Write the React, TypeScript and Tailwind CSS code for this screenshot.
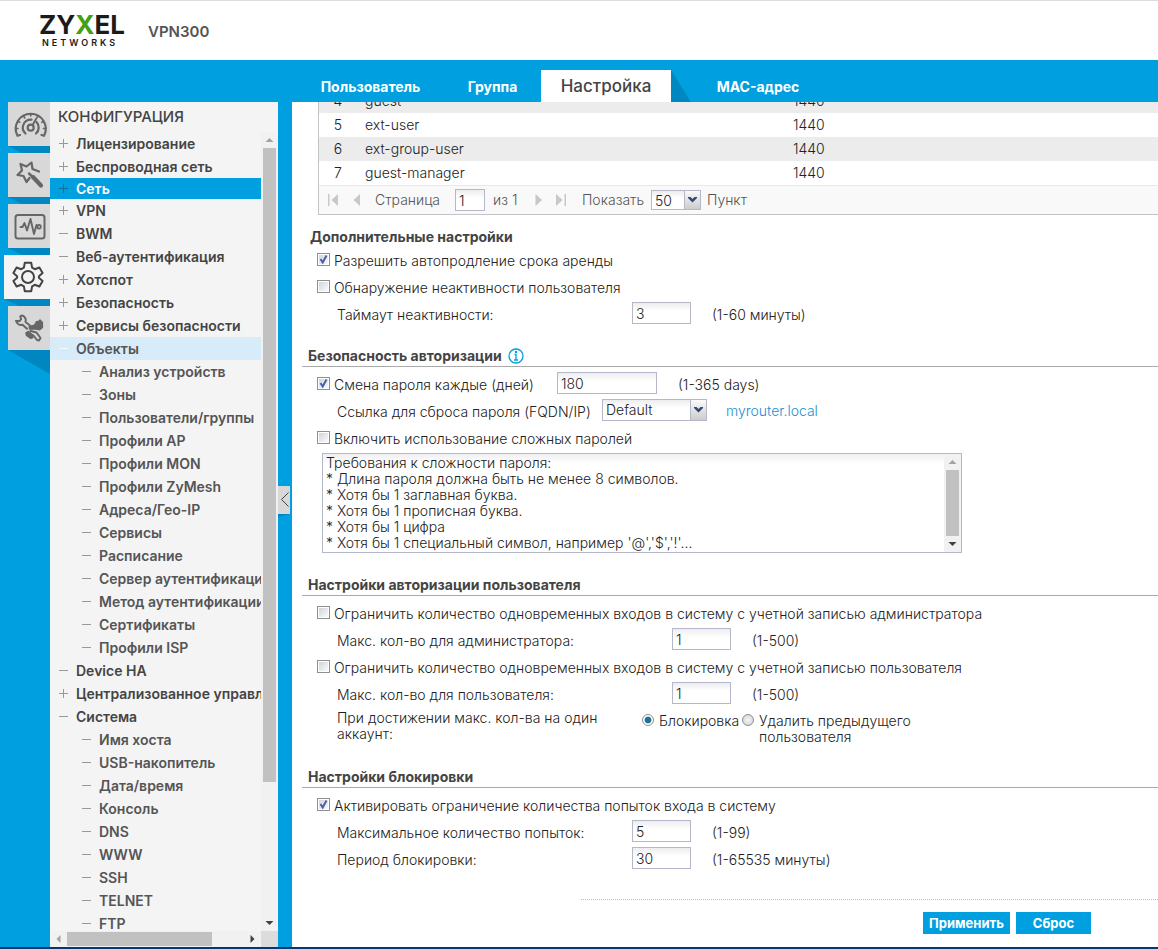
import { useState, type ReactNode } from 'react';

type MenuEntry = {
  label: string;
  mark: 'plus' | 'minus';
  level?: 1 | 2;
  state?: 'active' | 'open';
};

const menu: MenuEntry[] = [
  { label: 'Лицензирование', mark: 'plus' },
  { label: 'Беспроводная сеть', mark: 'plus' },
  { label: 'Сеть', mark: 'plus', state: 'active' },
  { label: 'VPN', mark: 'plus' },
  { label: 'BWM', mark: 'minus' },
  { label: 'Веб-аутентификация', mark: 'minus' },
  { label: 'Хотспот', mark: 'plus' },
  { label: 'Безопасность', mark: 'plus' },
  { label: 'Сервисы безопасности', mark: 'plus' },
  { label: 'Объекты', mark: 'minus', state: 'open' },
  { label: 'Анализ устройств', mark: 'minus', level: 2 },
  { label: 'Зоны', mark: 'minus', level: 2 },
  { label: 'Пользователи/группы', mark: 'minus', level: 2 },
  { label: 'Профили AP', mark: 'minus', level: 2 },
  { label: 'Профили MON', mark: 'minus', level: 2 },
  { label: 'Профили ZyMesh', mark: 'minus', level: 2 },
  { label: 'Адреса/Гео-IP', mark: 'minus', level: 2 },
  { label: 'Сервисы', mark: 'minus', level: 2 },
  { label: 'Расписание', mark: 'minus', level: 2 },
  { label: 'Сервер аутентификации', mark: 'minus', level: 2 },
  { label: 'Метод аутентификации', mark: 'minus', level: 2 },
  { label: 'Сертификаты', mark: 'minus', level: 2 },
  { label: 'Профили ISP', mark: 'minus', level: 2 },
  { label: 'Device HA', mark: 'minus' },
  { label: 'Централизованное управление', mark: 'plus' },
  { label: 'Система', mark: 'minus' },
  { label: 'Имя хоста', mark: 'minus', level: 2 },
  { label: 'USB-накопитель', mark: 'minus', level: 2 },
  { label: 'Дата/время', mark: 'minus', level: 2 },
  { label: 'Консоль', mark: 'minus', level: 2 },
  { label: 'DNS', mark: 'minus', level: 2 },
  { label: 'WWW', mark: 'minus', level: 2 },
  { label: 'SSH', mark: 'minus', level: 2 },
  { label: 'TELNET', mark: 'minus', level: 2 },
  { label: 'FTP', mark: 'minus', level: 2 },
];

const users = [
  { id: 4, name: 'guest', lease: 1440 },
  { id: 5, name: 'ext-user', lease: 1440 },
  { id: 6, name: 'ext-group-user', lease: 1440 },
  { id: 7, name: 'guest-manager', lease: 1440 },
];

const passwordRules = `Требования к сложности пароля:
* Длина пароля должна быть не менее 8 символов.
* Хотя бы 1 заглавная буква.
* Хотя бы 1 прописная буква.
* Хотя бы 1 цифра
* Хотя бы 1 специальный символ, например '@','$','!'...`;

export default function App() {
  return (
    <div className="flex h-screen flex-col overflow-hidden border-b-2 border-[#003a70] bg-[#009fe0] font-['Inter','Noto_Sans',sans-serif] text-sm text-[#222]">
      <Header />
      <div className="flex min-h-0 flex-1">
        <div className="flex shrink-0 pt-[42px]">
          <IconRail />
          <Sidebar />
          <div className="w-[14px] pt-96">
            <button
              type="button"
              aria-label="Свернуть меню"
              className="relative flex h-7 w-3 items-center justify-center bg-[#d8d8d8]"
            >
              <svg viewBox="0 0 12 28" className="h-7 w-3" fill="none" stroke="#444">
                <path d="M10.5 6.5 3.5 13.5l7 7" />
              </svg>
              <svg viewBox="0 0 12 4" className="absolute top-full left-0 h-1 w-3" fill="#0087c2">
                <path d="M0 0h12L0 3z" />
              </svg>
            </button>
          </div>
        </div>
        <div className="flex min-w-0 flex-1 flex-col">
          <Tabs />
          <main className="min-h-0 flex-1 overflow-hidden bg-white pl-[10px]">
            <UserTable />
            <Settings />
          </main>
        </div>
      </div>
    </div>
  );
}

function Header() {
  return (
    <header className="flex h-[60px] shrink-0 items-center border-t border-[#ddd] bg-white pl-[39px]">
      <div className="w-[88px] text-[#1d1a1a]">
        <div className="text-[26px] leading-[22px] font-bold">
          ZY<span className="text-[#43a011]">X</span>EL
        </div>
        <div className="pt-[2px] pl-[3px] text-[9px] leading-[10px] font-semibold tracking-[3px]">
          NETWORKS
        </div>
      </div>
      <div className="pt-[3px] pl-[21px] text-[15px] font-semibold text-[#555]">VPN300</div>
    </header>
  );
}

function Tabs() {
  return (
    <nav className="flex h-[42px] shrink-0 items-end pl-[5px] font-bold text-white">
      <a href="#user" className="w-[147px] pb-[5px] text-center">
        Пользователь
      </a>
      <a href="#group" className="w-[97px] pb-[5px] text-center">
        Группа
      </a>
      <a
        href="#setting"
        aria-current="page"
        className="flex h-8 w-[130px] items-center justify-center bg-white text-[17px] font-medium text-[#444]"
      >
        Настройка
      </a>
      <svg viewBox="0 0 20 32" className="h-8 w-5" fill="#0087c2">
        <path d="M0 0 20 32H0z" />
      </svg>
      <a href="#mac" className="w-[134px] pb-[5px] text-center">
        MAC-адрес
      </a>
    </nav>
  );
}

function IconRail() {
  return (
    <nav className="flex w-[50px] flex-col items-end gap-[7px]">
      <RailItem label="Панель мониторинга">
        <path d="M12 33 9.500 33.800A15 15 0 1 1 36 33.800L33.500 33" strokeWidth="2.2" />
        <path d="M17.500 31.500A8 8 0 0 1 23.500 17.600M28.500 20a8 8 0 0 1-.5 11.500" strokeWidth="2.200" />
        <circle cx="22.700" cy="25.700" r="3" strokeWidth="2.200" />
        <path d="m24.500 23.200 3.500-6.200" strokeWidth="2" />
        <path
          d="M22.700 12v2M15.800 14.500l1 1.500M29.700 14.500l-1 1.500M10 19.500l1.700.8M35.500 19.500l-1.700.8M8 26.500h2M35.500 26.500h2"
          strokeWidth="1.600"
        />
      </RailItem>
      <RailItem label="Мастер настройки">
        <path
          d="M31 18.500 24.500 16 23.500 9.500 18.500 13.500 12.500 11 14 17.500 9.500 22 15.500 23 18.500 29 21.500 25"
          strokeWidth="2.200"
        />
        <path d="m21 20.500 3 2.800" strokeWidth="2.400" />
        <path d="m25 24 8 8.500" strokeWidth="4.200" />
      </RailItem>
      <RailItem label="Мониторинг">
        <rect x="7.500" y="11" width="29" height="23.500" rx="2.500" strokeWidth="2" />
        <path d="M12.500 23h2l2-4 2.500 7.500 3.500-11.500 3.500 15 2.500-9 1 2.500" strokeWidth="1.900" />
        <circle cx="31" cy="22.800" r="1.800" strokeWidth="1.800" />
      </RailItem>
      <RailItem label="Конфигурация" active>
        <circle cx="22" cy="22" r="6" strokeWidth="2" />
        <path
          d="M18.800 7.800h6.400l.9 4.800 2.700 1.600 4.600-1.700 3.200 5.600-3.700 3.100v1.600l3.700 3.100-3.200 5.600-4.600-1.700-2.700 1.600-.9 4.800h-6.400l-.9-4.800-2.700-1.600-4.600 1.700-3.200-5.600 3.700-3.100v-1.600l-3.700-3.100 3.200-5.600 4.600 1.700 2.700-1.600z"
          strokeWidth="2"
        />
      </RailItem>
      <RailItem label="Обслуживание" last>
        <path
          d="M15.500 10c2 1.500 2.600 3.800 2 6l4.500 3.500M8 14.800c.8 3 3.500 4.800 6.500 4l4.500 4M8 14.800l3.500.4 1.700-2.200-1-2.500 1.300-1 2 .5"
          strokeWidth="2"
        />
        <path
          d="m21 20.500 5.500-1.500 2-3.500 2.500-.5 1-1.200 2.500 2.700v5l-3 2.500-4.500-1-5.500.2z"
          fill="#666"
          strokeWidth="1.200"
        />
        <path d="m22.500 25 6 1.500 4 5.500-1.500 2.500-2-.5-4-5" strokeWidth="2" />
        <path d="m18 27 2.500-1.500 3.500 3 .8 3-2 .8-4.300-3z" fill="#666" strokeWidth="1.500" />
      </RailItem>
    </nav>
  );
}

function RailItem({
  label,
  active,
  last,
  children,
}: {
  label: string;
  active?: boolean;
  last?: boolean;
  children: ReactNode;
}) {
  return (
    <a
      href="#section"
      aria-label={label}
      className={`relative flex h-11 items-center ${
        active ? 'w-[46px] bg-[#f4f4f4] pl-[2px]' : 'w-[42px] bg-[#d8d8d8]'
      }`}
    >
      <svg
        viewBox="0 0 44 44"
        className="h-11 w-11 shrink-0"
        fill="none"
        stroke={active ? '#444' : '#666'}
        strokeLinejoin="round"
        strokeLinecap="round"
      >
        {children}
      </svg>
      <svg
        viewBox="0 0 42 24"
        preserveAspectRatio="none"
        className={`absolute top-full left-0 w-full ${last ? 'h-6' : 'h-[7px]'}`}
        fill="#0087c2"
      >
        <path d={last ? 'M0 0h42v24z' : 'M0 0h42v24H14z'} />
      </svg>
    </a>
  );
}

function Sidebar() {
  return (
    <aside className="flex w-[228px] flex-col bg-[#f4f4f4]">
      <h2 className="h-[30px] pt-1 pl-2 text-[15px] font-medium text-[#444]">КОНФИГУРАЦИЯ</h2>
      <div className="flex min-h-0 flex-1">
        <ul className="min-w-0 flex-1 overflow-hidden">
          {menu.map((entry) => (
            <MenuRow key={entry.label} entry={entry} />
          ))}
        </ul>
        <div className="flex w-[17px] flex-col items-center bg-[#f1f1f1]">
          <Arrow dir="up" faded />
          <div className="w-[13px] flex-[632] bg-[#c1c1c1]" />
          <div className="flex-[133]" />
          <Arrow dir="down" />
        </div>
      </div>
      <div className="flex h-4 shrink-0 bg-[#f1f1f1]">
        <Arrow dir="left" faded />
        <div className="my-px flex-[145] bg-[#c1c1c1]" />
        <div className="flex-[32]" />
        <Arrow dir="right" />
        <div className="w-[17px] bg-[#dcdcdc]" />
      </div>
    </aside>
  );
}

function MenuRow({ entry }: { entry: MenuEntry }) {
  const active = entry.state === 'active';
  const open = entry.state === 'open';
  return (
    <li>
      <a
        href="#menu"
        className={`flex items-center gap-2 overflow-hidden font-semibold whitespace-nowrap ${
          entry.level === 2 ? 'pl-8' : 'pl-[9px]'
        } ${
          active
            ? 'h-[21px] bg-[#009fe0] text-white'
            : open
              ? 'h-[23px] bg-[#d8ebf8] text-[#555]'
              : entry.level === 2
                ? 'h-[23px] text-[#555]'
                : 'h-[23px] text-[#444]'
        }`}
      >
        <svg
          viewBox="0 0 9 9"
          className="size-[9px] shrink-0"
          stroke={active ? '#1c6f93' : open ? '#f4f9fd' : '#999'}
        >
          <path d={entry.mark === 'plus' ? 'M0 4.500h9M4.500 0v9' : 'M0 4.500h9'} />
        </svg>
        {entry.label}
      </a>
    </li>
  );
}

function Arrow({ dir, faded }: { dir: 'up' | 'down' | 'left' | 'right'; faded?: boolean }) {
  const paths = {
    up: 'M4.500 10h8l-4-4z',
    down: 'M4.500 6h8l-4 4z',
    left: 'M10.500 4v8l-4-4z',
    right: 'M6.500 4v8l4-4z',
  };
  return (
    <svg viewBox="0 0 17 16" className="h-4 w-[17px] shrink-0" fill={faded ? '#a3a3a3' : '#404040'}>
      <path d={paths[dir]} />
    </svg>
  );
}

function UserTable() {
  return (
    <div className="-mt-[13px] ml-4 border-b border-l border-[#c4c4c4] font-light">
      <table className="w-full table-fixed">
        <colgroup>
          <col className="w-[38px]" />
          <col className="w-[428px]" />
          <col />
        </colgroup>
        <tbody>
          {users.map((user) => (
            <tr key={user.id} className="h-6 odd:bg-[#ececec] even:bg-white">
              <td className="p-0 text-center leading-6">{user.id}</td>
              <td className="p-0 pl-2 leading-6">{user.name}</td>
              <td className="p-0 pl-2 leading-6">{user.lease}</td>
            </tr>
          ))}
        </tbody>
      </table>
      <div className="flex h-[29px] items-center border-t border-[#e8e8e8] bg-[#f9f9f9] pl-2 text-[#555]">
        <button type="button" aria-label="Первая страница" className="w-6">
          <PagerIcon d="M1 0h1.500v12H1zM11 0v12L4.500 6z" />
        </button>
        <button type="button" aria-label="Предыдущая страница" className="w-6">
          <PagerIcon d="M9 0v12L2.500 6z" />
        </button>
        <label htmlFor="page" className="w-20">
          Страница
        </label>
        <TextBox id="page" value="1" className="h-[22px] w-[30px]" />
        <span className="w-11 pl-2">из 1</span>
        <button type="button" aria-label="Следующая страница" className="w-6 pl-1">
          <PagerIcon d="M2.500 0v12L9 6z" />
        </button>
        <button type="button" aria-label="Последняя страница" className="w-[29px] pl-[2px]">
          <PagerIcon d="M1 0v12L7.500 6zM9.500 0H11v12H9.500z" />
        </button>
        <label htmlFor="page-size" className="w-[69px]">
          Показать
        </label>
        <SelectBox id="page-size" options={['50', '100']} className="h-5 w-[50px]" />
        <span className="pl-[6px]">Пункт</span>
      </div>
    </div>
  );
}

function PagerIcon({ d }: { d: string }) {
  return (
    <svg viewBox="0 0 12 12" className="size-3" fill="#c8c8c8">
      <path d={d} />
    </svg>
  );
}

function Settings() {
  return (
    <form className="font-light" onSubmit={(e) => e.preventDefault()}>
      <h3 className="mt-3 h-5 pl-2 leading-5 font-bold text-[#444]">Дополнительные настройки</h3>
      <CheckRow id="renew" label="Разрешить автопродление срока аренды" checked />
      <CheckRow id="idle" label="Обнаружение неактивности пользователя" />
      <Field id="idle-timeout" label="Таймаут неактивности:" value="3" note="(1-60 минуты)" />

      <SectionTitle className="mt-[18px]">
        Безопасность авторизации
        <svg viewBox="0 0 16 16" className="size-4" fill="none" stroke="#009fe0" strokeWidth="1.300">
          <circle cx="8" cy="8" r="7" />
          <path d="M6.500 6.500H8V12M6 12h4" />
          <circle cx="8" cy="4" r=".6" fill="#009fe0" />
        </svg>
      </SectionTitle>
      <div className="flex h-[27px] items-start">
        <div className="w-[255px]">
          <CheckRow id="change" label="Смена пароля каждые (дней)" checked />
        </div>
        <TextBox id="change-days" ariaLabel="Дней" value="180" className="mt-px h-[22px] w-[100px]" />
        <span className="pl-[21px] leading-[27px]">(1-365 days)</span>
      </div>
      <div className="flex h-[27px] items-start pl-[35px]">
        <label htmlFor="reset-link" className="w-[265px] leading-[27px] whitespace-nowrap">
          Ссылка для сброса пароля (FQDN/IP)
        </label>
        <SelectBox id="reset-link" options={['Default', 'Custom']} className="mt-px h-[22px] w-[105px]" />
        <a href="#myrouter" className="pl-[19px] leading-[26px] text-[#1e8fd0]">
          myrouter.local
        </a>
      </div>
      <CheckRow id="complex" label="Включить использование сложных паролей" />
      <div className="mt-px ml-5 flex h-[100px] w-[640px] border border-[#b5b8c8]">
        <textarea
          readOnly
          aria-label="Требования к сложности пароля"
          defaultValue={passwordRules}
          className="min-w-0 flex-1 resize-none overflow-hidden bg-white bg-linear-to-b from-[#f0f0f3] to-white to-10% pt-px pl-[3px] leading-4 outline-none"
        />
        <div className="flex w-[17px] flex-col items-center bg-[#f1f1f1]">
          <Arrow dir="up" faded />
          <div className="w-[13px] flex-1 bg-[#c1c1c1]" />
          <Arrow dir="down" />
        </div>
      </div>

      <SectionTitle className="mt-[22px]">Настройки авторизации пользователя</SectionTitle>
      <CheckRow
        id="limit-admin"
        label="Ограничить количество одновременных входов в систему с учетной записью администратора"
      />
      <Field id="max-admin" label="Макс. кол-во для администратора:" value="1" note="(1-500)" wide />
      <CheckRow
        id="limit-user"
        label="Ограничить количество одновременных входов в систему с учетной записью пользователя"
      />
      <Field id="max-user" label="Макс. кол-во для пользователя:" value="1" note="(1-500)" wide />
      <fieldset className="flex items-start pt-[2px] pl-[35px] leading-4">
        <legend className="float-left w-[305px] pr-4">При достижении макс. кол-ва на один аккаунт:</legend>
        <Radio id="block" label="Блокировка" checked className="w-[100px]" />
        <Radio id="remove" label="Удалить предыдущего пользователя" className="w-48" />
      </fieldset>

      <SectionTitle className="mt-[22px]">Настройки блокировки</SectionTitle>
      <CheckRow id="lockout" label="Активировать ограничение количества попыток входа в систему" checked />
      <Field id="retries" label="Максимальное количество попыток:" value="5" note="(1-99)" />
      <Field id="lock-period" label="Период блокировки:" value="30" note="(1-65535 минуты)" />

      <div className="mt-[26px] ml-[279px] flex justify-end gap-[6px] border-t border-dotted border-[#bbb] pt-3 pr-[67px] text-[13px] font-bold text-white">
        <button type="submit" className="h-[22px] w-[87px] bg-[#009fe0]">
          Применить
        </button>
        <button type="reset" className="h-[22px] w-[75px] bg-[#009fe0]">
          Сброс
        </button>
      </div>
    </form>
  );
}

function SectionTitle({ children, className }: { children: ReactNode; className: string }) {
  return (
    <h3
      className={`mb-1 flex h-[21px] items-center gap-[6px] border-b border-[#aaa] pl-[6px] font-bold text-[#444] ${className}`}
    >
      {children}
    </h3>
  );
}

function CheckRow({ id, label, checked }: { id: string; label: string; checked?: boolean }) {
  const [on, setOn] = useState(!!checked);
  return (
    <div className="flex h-[27px] items-start gap-1 pl-[15px]">
      <span className="relative mt-[6px] size-[13px] shrink-0">
        <input
          id={id}
          type="checkbox"
          checked={on}
          onChange={() => setOn(!on)}
          className="block size-[13px] appearance-none border border-[#8e8f8f] bg-linear-to-br from-[#cdd0d5] to-white ring-1 ring-white ring-inset"
        />
        {on && (
          <svg
            viewBox="0 0 13 13"
            className="pointer-events-none absolute inset-0"
            fill="none"
            stroke="#4a5fae"
            strokeWidth="2"
          >
            <path d="m3.500 6 2.200 3.500L9.500 2.500" />
          </svg>
        )}
      </span>
      <label htmlFor={id} className="leading-[27px] whitespace-nowrap">
        {label}
      </label>
    </div>
  );
}

function Field({
  id,
  label,
  value,
  note,
  wide,
}: {
  id: string;
  label: string;
  value: string;
  note: string;
  wide?: boolean;
}) {
  return (
    <div className="flex h-[27px] items-start pl-[35px] leading-[27px]">
      <label htmlFor={id} className={wide ? 'w-[335px]' : 'w-[295px]'}>
        {label}
      </label>
      <TextBox id={id} value={value} className="mt-px h-[22px] w-[59px]" />
      <span className="pl-[21px]">{note}</span>
    </div>
  );
}

function TextBox({
  id,
  value,
  className,
  ariaLabel,
}: {
  id: string;
  value: string;
  className: string;
  ariaLabel?: string;
}) {
  return (
    <input
      id={id}
      type="text"
      aria-label={ariaLabel}
      defaultValue={value}
      className={`border border-[#b5b8c8] bg-white bg-linear-to-b from-[#ededf0] to-white to-40% px-[3px] leading-5 text-[#222] outline-none ${className}`}
    />
  );
}

function SelectBox({ id, options, className }: { id: string; options: string[]; className: string }) {
  return (
    <span className={`relative ${className}`}>
      <select
        id={id}
        className="block size-full appearance-none border border-[#b5b8c8] bg-white bg-linear-to-b from-[#ededf0] to-white to-40% pl-[3px] text-[#222] outline-none"
      >
        {options.map((option) => (
          <option key={option}>{option}</option>
        ))}
      </select>
      <span className="pointer-events-none absolute inset-y-px right-px flex w-4 items-center justify-center border-l border-[#b5b8c8] bg-linear-to-b from-[#fafafa] to-[#ccc]">
        <svg viewBox="0 0 9 6" className="h-[6px] w-[9px]" fill="#33477a">
          <path d="M0 0h2.500l2 2 2-2H9v1L4.500 5.500 0 1z" />
        </svg>
      </span>
    </span>
  );
}

function Radio({
  id,
  label,
  checked,
  className,
}: {
  id: string;
  label: string;
  checked?: boolean;
  className: string;
}) {
  return (
    <span className={`flex items-start gap-[5px] pt-[3px] ${className}`}>
      <input
        id={id}
        type="radio"
        name="on-limit"
        defaultChecked={checked}
        className="mt-px size-3 shrink-0 appearance-none rounded-full border border-[#8e8f8f] bg-radial from-[#f4f4f4] to-[#d0d0d0] checked:from-[#1b6f98] checked:from-40% checked:to-white checked:to-55%"
      />
      <label htmlFor={id}>{label}</label>
    </span>
  );
}
